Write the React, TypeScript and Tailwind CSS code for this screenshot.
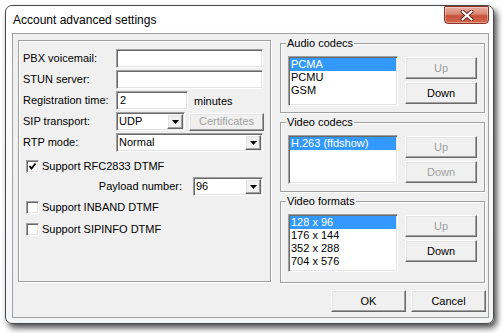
import React from "react";

const SUNKEN =
  "border border-t-[#a0a0a0] border-l-[#a0a0a0] border-r-white border-b-white shadow-[inset_1px_1px_0_#696969,inset_-1px_-1px_0_#e3e3e3]";
const RAISED =
  "border border-t-white border-l-white border-r-[#696969] border-b-[#696969] shadow-[inset_-1px_-1px_0_#a0a0a0,inset_1px_1px_0_#e3e3e3]";
const ETCHED = "border border-[#a0a0a0] shadow-[inset_1px_1px_0_#fff,1px_1px_0_#fff]";

function Btn({ label, disabled, className }: { label: string; disabled?: boolean; className: string }) {
  return (
    <div
      className={`${RAISED} bg-[#f0f0f0] flex items-center justify-center ${className} ${
        disabled ? "text-[#a0a0a0]" : "text-black"
      }`}
    >
      {label}
    </div>
  );
}

function Arrow() {
  return (
    <div className={`${RAISED} bg-[#f0f0f0] w-[16px] h-full flex items-center justify-center`}>
      <svg width="7" height="4" viewBox="0 0 7 4">
        <polygon points="0,0 7,0 3.5,4" fill="#000" />
      </svg>
    </div>
  );
}

function Combo({ value, className }: { value: string; className: string }) {
  return (
    <div className={`${SUNKEN} bg-white h-[19px] p-[1px] flex ${className}`}>
      <span className="flex-1 pl-[1px] leading-[15px]">{value}</span>
      <Arrow />
    </div>
  );
}

function Field({ value, className }: { value?: string; className: string }) {
  return (
    <div className={`${SUNKEN} bg-white h-[19px] pl-[3px] leading-[17px] ${className}`}>{value}</div>
  );
}

function Check({ label, checked }: { label: string; checked?: boolean }) {
  return (
    <div className="flex items-center h-[13px] ml-[3px]">
      <div className={`${SUNKEN} bg-white w-[13px] h-[13px] flex items-center justify-center`}>
        {checked && (
          <svg width="9" height="9" viewBox="0 0 9 9">
            <path d="M1.5 4 L3.5 6.5 L7.5 1.5" stroke="#000" strokeWidth="1.8" fill="none" />
          </svg>
        )}
      </div>
      <span className="ml-[3px]">{label}</span>
    </div>
  );
}

function ListBox({ items, height }: { items: string[]; height: string }) {
  return (
    <div className={`${SUNKEN} bg-white w-[110px] p-[1px] ${height}`}>
      {items.map((it, i) => (
        <div
          key={it}
          className={`h-[13px] leading-[13px] pl-[1px] ${i === 0 ? "bg-[#3399ff] text-white" : ""}`}
        >
          {it}
        </div>
      ))}
    </div>
  );
}

function Group({
  title,
  items,
  listH,
  boxH,
  upDisabled,
  downDisabled,
}: {
  title: string;
  items: string[];
  listH: string;
  boxH: string;
  upDisabled?: boolean;
  downDisabled?: boolean;
}) {
  return (
    <div className={`relative ${ETCHED} ${boxH} pt-[12px] pl-[7px] flex`}>
      <span className="absolute -top-[7px] left-[5px] px-[1px] bg-[#f0f0f0] leading-[13px]">{title}</span>
      <ListBox items={items} height={listH} />
      <div className="ml-[7px] mt-[1px] flex flex-col gap-[3px]">
        <Btn label="Up" disabled={upDisabled} className="w-[72px] h-[22px]" />
        <Btn label="Down" disabled={downDisabled} className="w-[72px] h-[22px]" />
      </div>
    </div>
  );
}

export default function App() {
  return (
    <div className="w-[503px] h-[333px] bg-white pl-[5px] pt-[5px] text-[11px] leading-[13px] font-['Liberation_Sans',Arial,sans-serif] text-black">
      <div className="w-[489px] h-[319px] rounded-[7px] border border-[#4a4a4a] bg-[linear-gradient(#ffffff,#f4f5f7)] shadow-[3px_4px_6px_rgba(0,0,0,0.7)] flex flex-col">
        {/* Title bar */}
        <div className="h-[27px] flex items-start">
          <span className="pl-[7px] pt-[7px] text-[12px] leading-[14px]">Account advanced settings</span>
          <div className="ml-auto mr-[4px] w-[45px] h-[18px] rounded-b-[4px] rounded-t-[1px] border border-[#8a3324] bg-[linear-gradient(#eab0a3,#d98472_45%,#c8503a_55%,#d2694f)] shadow-[inset_0_0_0_1px_rgba(255,255,255,0.35)] flex items-center justify-center">
            <svg width="14" height="11" viewBox="0 0 14 11">
              <path d="M2.5 1.5 L11.5 9.5 M11.5 1.5 L2.5 9.5" stroke="#6b2418" strokeWidth="4" strokeLinecap="round" />
              <path d="M2.5 1.5 L11.5 9.5 M11.5 1.5 L2.5 9.5" stroke="#fff" strokeWidth="2.2" strokeLinecap="round" />
            </svg>
          </div>
        </div>

        {/* Client area */}
        <div className="ml-[6px] mr-[4px] h-[285px] border border-[#a0a0a0] bg-[#f0f0f0] pl-[5px] pt-[6px] pr-[2px]">
          <div className="flex items-start">
            {/* Left group */}
            <div className={`${ETCHED} w-[253px] h-[242px] pt-[8px] pl-[4px] flex flex-col`}>
              <div className="flex items-center h-[19px]">
                <span className="w-[93px]">PBX voicemail:</span>
                <Field className="w-[147px]" />
              </div>
              <div className="flex items-center h-[19px] mt-[2px]">
                <span className="w-[93px]">STUN server:</span>
                <Field className="w-[147px]" />
              </div>
              <div className="flex items-center h-[19px] mt-[2px]">
                <span className="w-[93px]">Registration time:</span>
                <Field value="2" className="w-[72px]" />
                <span className="ml-[6px] mt-[2px]">minutes</span>
              </div>
              <div className="flex items-center h-[19px] mt-[2px]">
                <span className="w-[93px]">SIP transport:</span>
                <Combo value="UDP" className="w-[69px]" />
                <Btn label="Certificates" disabled className="ml-[4px] w-[75px] h-[18px]" />
              </div>
              <div className="flex items-center h-[19px] mt-[2px]">
                <span className="w-[93px]">RTP mode:</span>
                <Combo value="Normal" className="w-[147px]" />
              </div>
              <div className="mt-[8px]">
                <Check label="Support RFC2833 DTMF" checked />
              </div>
              <div className="flex items-center h-[19px] mt-[4px]">
                <span className="w-[170px] text-right pr-[11px]">Payload number:</span>
                <Combo value="96" className="w-[70px]" />
              </div>
              <div className="mt-[5px]">
                <Check label="Support INBAND DTMF" />
              </div>
              <div className="mt-[9px]">
                <Check label="Support SIPINFO DTMF" />
              </div>
            </div>

            {/* Right column */}
            <div className="ml-[9px] mt-[3px] w-[205px] flex flex-col gap-[9px]">
              <Group
                title="Audio codecs"
                items={["PCMA", "PCMU", "GSM"]}
                listH="h-[50px]"
                boxH="h-[70px]"
                upDisabled
              />
              <Group
                title="Video codecs"
                items={["H.263 (ffdshow)"]}
                listH="h-[49px]"
                boxH="h-[70px]"
                upDisabled
                downDisabled
              />
              <Group
                title="Video formats"
                items={["128 x 96", "176 x 144", "352 x 288", "704 x 576"]}
                listH="h-[58px]"
                boxH="h-[82px]"
                upDisabled
              />
            </div>
          </div>

          {/* Dialog buttons */}
          <div className="mt-[7px] flex justify-end gap-[5px]">
            <Btn label="OK" className="w-[75px] h-[22px]" />
            <Btn label="Cancel" className="w-[75px] h-[22px]" />
          </div>
        </div>
      </div>
    </div>
  );
}
